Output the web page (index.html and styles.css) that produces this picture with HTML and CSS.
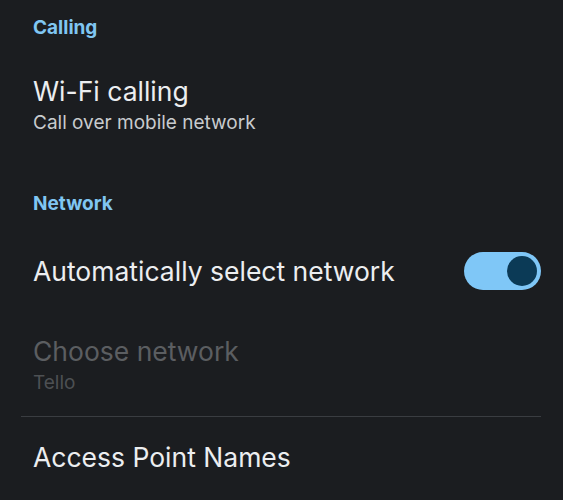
FILE: index.html
```html
<!DOCTYPE html>
<html lang="en">
<head>
  <meta charset="UTF-8">
  <title>Mobile network</title>
  <link rel="stylesheet" href="styles.css">
</head>
<body>

  <div class="screen">
    <div class="category first">Calling</div>

    <div class="pref wifi">
      <div class="title">Wi-Fi calling</div>
      <div class="summary">Call over mobile network</div>
    </div>

    <div class="category network">Network</div>

    <div class="pref auto">
      <div class="title">Automatically select network</div>
      <span class="switch"><span class="knob"></span></span>
    </div>

    <div class="pref choose disabled">
      <div class="title">Choose network</div>
      <div class="summary">Tello</div>
    </div>

    <div class="divider"></div>

    <div class="pref apn">
      <div class="title">Access Point Names</div>
    </div>
  </div>

</body>
</html>
```

FILE: styles.css
```css
* {
  box-sizing: border-box;
}
body {
  margin: 0;
  background: #1b1d20;
  font-family: Inter, 'Open Sans', sans-serif;
  height: 500px;
  overflow: hidden;
}
.screen {
  padding: 0 22px 0 21px;
}

.category {
  padding-left: 12px;
  font-size: 19px;
  line-height: 24px;
  font-weight: 700;
  color: #80c6f2;
}
.category.first {
  padding-top: 16px;
}
.category.network {
  margin-top: 57px;
}

.pref {
  padding-left: 12px;
}
.pref .title {
  font-size: 26.5px;
  line-height: 32px;
  color: #eceef0;
}
.pref .summary {
  margin-top: 4px;
  font-size: 19px;
  line-height: 24px;
  color: #c8cbce;
}
.wifi {
  margin-top: 35px;
}
.auto {
  margin-top: 36px;
  display: flex;
  justify-content: space-between;
  align-items: center;
}
.choose {
  margin-top: 45px;
}
.disabled .title {
  color: #5b5e61;
}
.disabled .summary {
  color: #4d5053;
}

.switch {
  width: 77px;
  height: 38px;
  border-radius: 19px;
  background: #7fc7f7;
  display: flex;
  justify-content: flex-end;
  align-items: center;
  padding-right: 4px;
}
.knob {
  width: 30px;
  height: 30px;
  border-radius: 50%;
  background: #0b3a56;
}

.divider {
  margin-top: 21px;
  height: 1px;
  background: #3a3d41;
}
.apn {
  margin-top: 24px;
}
```
